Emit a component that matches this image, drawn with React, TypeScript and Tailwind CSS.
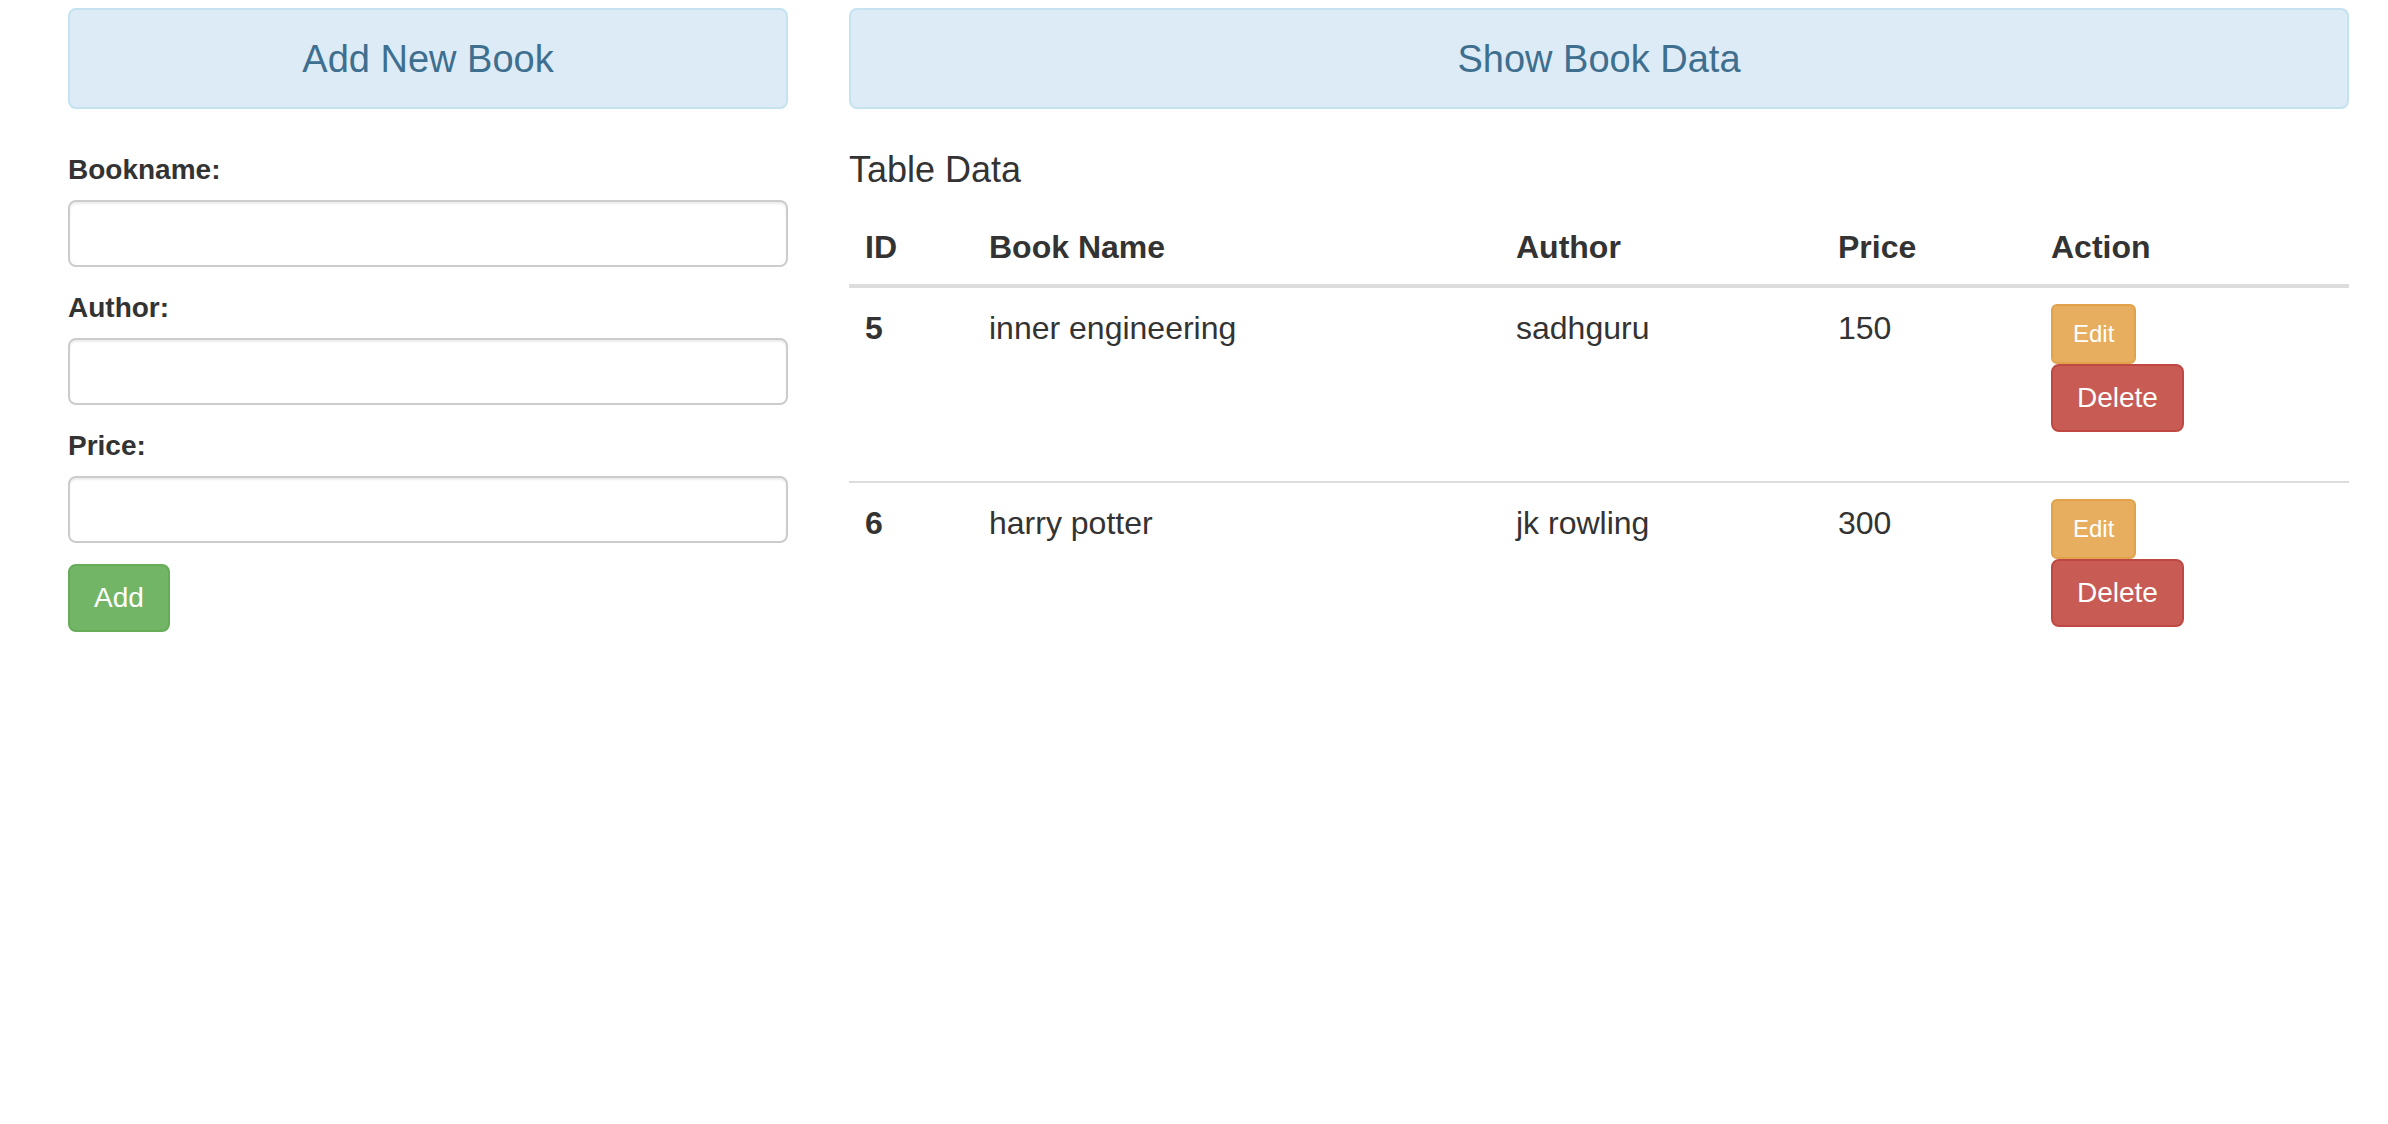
import { useState } from 'react'

type Book = {
  id: number
  name: string
  author: string
  price: number
}

const initialBooks: Book[] = [
  { id: 5, name: 'inner engineering', author: 'sadhguru', price: 150 },
  { id: 6, name: 'harry potter', author: 'jk rowling', price: 300 },
]

function Field({ label, value, onChange }: { label: string; value: string; onChange: (v: string) => void }) {
  return (
    <div className="mb-[21px]">
      <label className="mb-[10px] block text-[28px] font-bold leading-[40px]">{label}</label>
      <input
        className="block h-[67px] w-full rounded-[8px] border-2 border-[#cccccc] px-[24px] text-[28px] shadow-[inset_0_2px_2px_rgba(0,0,0,0.075)] outline-none"
        value={value}
        onChange={(e) => onChange(e.target.value)}
      />
    </div>
  )
}

export default function App() {
  const [books, setBooks] = useState<Book[]>(initialBooks)
  const [name, setName] = useState('')
  const [author, setAuthor] = useState('')
  const [price, setPrice] = useState('')

  function handleAdd() {
    if (!name.trim()) return
    const nextId = books.length ? books[books.length - 1].id + 1 : 1
    setBooks((prev) => [...prev, { id: nextId, name, author, price: Number(price) || 0 }])
    setName('')
    setAuthor('')
    setPrice('')
  }

  function handleDelete(id: number) {
    setBooks((prev) => prev.filter((b) => b.id !== id))
  }

  return (
    <div className="min-h-screen w-full bg-white font-['Liberation_Sans',Arial,sans-serif] text-[#333333]">
      <div className="flex pl-[68px] pt-[8px]">
        {/* left: form */}
        <div className="w-[720px] shrink-0">
          <div className="flex h-[101px] items-center justify-center rounded-[8px] border-2 border-[#c4e3ef] bg-[#ddebf7] text-[38px] leading-[44px] text-[#3e6f8f]">
            Add New Book
          </div>

          <div className="mt-[41px]">
            <Field label="Bookname:" value={name} onChange={setName} />
            <Field label="Author:" value={author} onChange={setAuthor} />
            <Field label="Price:" value={price} onChange={setPrice} />
            <button
              onClick={handleAdd}
              className="h-[68px] rounded-[8px] border-2 border-[#67ad59] bg-[#73b566] px-[24px] text-[28px] leading-[40px] text-white"
            >
              Add
            </button>
          </div>
        </div>

        {/* right: table */}
        <div className="ml-[61px] w-[1500px] shrink-0">
          <div className="flex h-[101px] items-center justify-center rounded-[8px] border-2 border-[#c4e3ef] bg-[#ddebf7] text-[38px] leading-[44px] text-[#3e6f8f]">
            Show Book Data
          </div>

          <h4 className="mb-[18px] mt-[41px] text-[36px] font-normal leading-[40px]">Table Data</h4>

          <table className="w-full table-fixed border-separate border-spacing-0">
            <colgroup>
              <col className="w-[124px]" />
              <col className="w-[527px]" />
              <col className="w-[322px]" />
              <col className="w-[213px]" />
              <col className="w-[314px]" />
            </colgroup>
            <thead>
              <tr>
                {['ID', 'Book Name', 'Author', 'Price', 'Action'].map((h) => (
                  <th
                    key={h}
                    className="border-b-4 border-[#dddddd] px-[16px] pb-[14px] pt-[16px] text-left align-bottom text-[32px] font-bold leading-[46px]"
                  >
                    {h}
                  </th>
                ))}
              </tr>
            </thead>
            <tbody>
              {books.map((b, idx) => {
                const line = idx > 0 ? 'border-t-2 border-[#dddddd]' : ''
                return (
                  <tr key={b.id}>
                    <td className={`${line} px-[16px] pt-[17px] align-top text-[32px] font-bold leading-[46px]`}>{b.id}</td>
                    <td className={`${line} px-[16px] pt-[17px] align-top text-[32px] leading-[46px]`}>{b.name}</td>
                    <td className={`${line} px-[16px] pt-[17px] align-top text-[32px] leading-[46px]`}>{b.author}</td>
                    <td className={`${line} px-[16px] pt-[17px] align-top text-[32px] leading-[46px]`}>{b.price}</td>
                    <td className={`${line} px-[16px] pb-[49px] pt-[16px] align-top`}>
                      <div className="flex flex-col items-start">
                        <button className="h-[60px] rounded-[6px] border-2 border-[#e0a24b] bg-[#e6ae5e] px-[20px] text-[24px] leading-[36px] text-white">
                          Edit
                        </button>
                        <button
                          onClick={() => handleDelete(b.id)}
                          className="h-[68px] rounded-[8px] border-2 border-[#bf4842] bg-[#c85b54] px-[24px] text-[28px] leading-[40px] text-white"
                        >
                          Delete
                        </button>
                      </div>
                    </td>
                  </tr>
                )
              })}
            </tbody>
          </table>
        </div>
      </div>
    </div>
  )
}
